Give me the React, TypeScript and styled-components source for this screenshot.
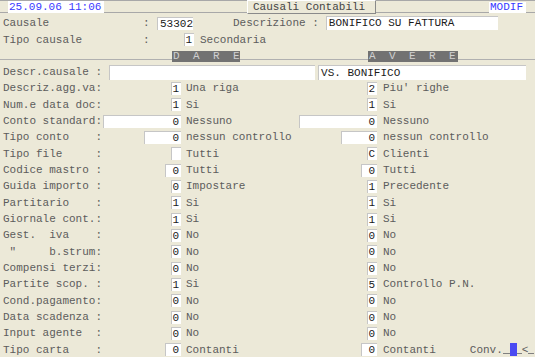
import React from "react"
import styled, { createGlobalStyle } from "styled-components"

// Global
const GlobalStyle = createGlobalStyle`
  *, *::before, *::after { box-sizing: border-box; }
  html, body { margin: 0; padding: 0; }
  body {
    background: #ece9d8;
    font-family: "Liberation Mono", "Courier New", monospace;
    font-size: 11px;
    color: #5c5c5c;
  }
`

const Screen = styled.div`
  width: 535px;
  height: 357px;
  overflow: hidden;
  background: #ece9d8;
`

// Top bar
const TopBar = styled.div`
  display: flex;
  align-items: flex-start;
  height: 15px;
  border-top: 1px solid #a8a8a8;
  background: linear-gradient(
    to bottom,
    transparent 11px,
    #a8a8a8 11px,
    #a8a8a8 12px,
    transparent 12px
  );
`

const Clock = styled.div`
  flex: none;
  margin-left: 8px;
  width: 96px;
  height: 12px;
  line-height: 12px;
  padding-left: 1px;
  background: #fff;
  color: #3a3aff;
`

const TitleTab = styled.div`
  flex: none;
  margin-left: 143px;
  margin-top: -1px;
  width: 129px;
  height: 14px;
  line-height: 12px;
  padding-left: 5px;
  border: 1px solid;
  border-color: #fff #8a8a8a #8a8a8a #fff;
  background: #ece9d8;
  color: #454545;
`

const ModeTag = styled.div`
  flex: none;
  margin-left: 113px;
  margin-top: 1px;
  width: 37px;
  height: 11px;
  line-height: 11px;
  padding-left: 1px;
  background: #fff;
  color: #3a3aff;
`

// Header rows
const HeadRow = styled.div<{ $h: number }>`
  display: flex;
  align-items: center;
  height: ${(p) => p.$h}px;
`

const HeadLabel = styled.span`
  flex: none;
  width: 143px;
  padding-left: 3px;
  white-space: pre;
`

const Colon = styled.span`
  flex: none;
  width: 14px;
`

const Text = styled.span<{ $ml?: number }>`
  flex: none;
  margin-left: ${(p) => p.$ml ?? 0}px;
  white-space: pre;
`

const Field = styled.span<{ $w: number; $ml?: number; $h?: number; $left?: boolean; $auto?: boolean }>`
  flex: none;
  display: inline-block;
  width: ${(p) => p.$w}px;
  height: ${(p) => p.$h ?? 13}px;
  line-height: ${(p) => (p.$h ?? 13) - 1}px;
  margin-left: ${(p) => (p.$auto ? "auto" : `${p.$ml ?? 0}px`)};
  padding: ${(p) => (p.$left ? "0 0 0 2px" : "0 2px 0 0")};
  text-align: ${(p) => (p.$left ? "left" : "right")};
  background: #fff;
  color: #1a1a1a;
  border-top: 1px solid #c6c6c6;
  border-left: 1px solid #c6c6c6;
  white-space: pre;
  overflow: hidden;
`

// Section headers
const SectionRow = styled.div`
  display: flex;
  height: 16px;
  background: linear-gradient(
    to bottom,
    transparent 11px,
    #b0b0b0 11px,
    #b0b0b0 12px,
    transparent 12px
  );
`

const SectionBar = styled.div<{ $ml: number; $w: number }>`
  flex: none;
  margin-left: ${(p) => p.$ml}px;
  margin-top: 3px;
  width: ${(p) => p.$w}px;
  height: 11px;
  line-height: 11px;
  padding-left: 1px;
  background: #727272;
  color: #d0d0d0;
  font-size: 11px;
  letter-spacing: 3.4px;
  white-space: pre;
`

// Form rows
const Row = styled.div`
  display: grid;
  grid-template-columns: 181px 196px 1fr;
  align-items: center;
  height: 16.33px;
`

const DescrRow = styled.div`
  display: flex;
  align-items: center;
  height: 16.33px;
  padding-left: 3px;
`

const Cell = styled.div<{ $pl: number }>`
  display: flex;
  align-items: center;
  padding-left: ${(p) => p.$pl}px;
  height: 100%;
  min-width: 0;
`

const ConvGroup = styled.div`
  display: flex;
  align-items: center;
  margin-left: 34px;
`

const Tick = styled.span<{ $w: number }>`
  display: inline-block;
  width: ${(p) => p.$w}px;
  height: 1px;
  margin-top: 7px;
  background: #808080;
`

const Cursor = styled.span`
  display: inline-block;
  width: 7px;
  height: 13px;
  background: #4a4af2;
`

type Val = { w: number; v: string }
type RowData = { label: string; l: Val; ld: string; r: Val; rd: string; conv?: boolean }

const d = (v: string): Val => ({ w: 10, v })

const rows: RowData[] = [
  { label: "Descriz.agg.va:", l: d("1"), ld: "Una riga", r: d("2"), rd: "Piu' righe" },
  { label: "Num.e data doc:", l: d("1"), ld: "Si", r: d("1"), rd: "Si" },
  { label: "Conto standard:", l: { w: 78, v: "0" }, ld: "Nessuno", r: { w: 78, v: "0" }, rd: "Nessuno" },
  { label: "Tipo conto    :", l: { w: 37, v: "0" }, ld: "nessun controllo", r: { w: 36, v: "0" }, rd: "nessun controllo" },
  { label: "Tipo file     :", l: d(""), ld: "Tutti", r: d("C"), rd: "Clienti" },
  { label: "Codice mastro :", l: { w: 16, v: "0" }, ld: "Tutti", r: { w: 16, v: "0" }, rd: "Tutti" },
  { label: "Guida importo :", l: d("0"), ld: "Impostare", r: d("1"), rd: "Precedente" },
  { label: "Partitario    :", l: d("1"), ld: "Si", r: d("1"), rd: "Si" },
  { label: "Giornale cont.:", l: d("1"), ld: "Si", r: d("1"), rd: "Si" },
  { label: "Gest.  iva    :", l: d("0"), ld: "No", r: d("0"), rd: "No" },
  { label: ' "     b.strum:', l: d("0"), ld: "No", r: d("0"), rd: "No" },
  { label: "Compensi terzi:", l: d("0"), ld: "No", r: d("0"), rd: "No" },
  { label: "Partite scop. :", l: d("1"), ld: "Si", r: d("5"), rd: "Controllo P.N." },
  { label: "Cond.pagamento:", l: d("0"), ld: "No", r: d("0"), rd: "No" },
  { label: "Data scadenza :", l: d("0"), ld: "No", r: d("0"), rd: "No" },
  { label: "Input agente  :", l: d("0"), ld: "No", r: d("0"), rd: "No" },
  { label: "Tipo carta    :", l: { w: 16, v: "0" }, ld: "Contanti", r: { w: 16, v: "0" }, rd: "Contanti", conv: true },
]

export default function App() {
  return (
    <Screen>
      <GlobalStyle />
      <TopBar>
        <Clock>25.09.06 11:06</Clock>
        <TitleTab>Causali Contabili</TitleTab>
        <ModeTag>MODIF</ModeTag>
      </TopBar>

      <HeadRow $h={16}>
        <HeadLabel>Causale</HeadLabel>
        <Colon>:</Colon>
        <Field $w={36} $left>53302</Field>
        <Text $ml={40}>Descrizione :</Text>
        <Field $w={172} $ml={7} $h={14} $left>BONIFICO SU FATTURA</Field>
      </HeadRow>
      <HeadRow $h={17}>
        <HeadLabel>Tipo causale</HeadLabel>
        <Colon>:</Colon>
        <Field $w={10} $ml={27}>1</Field>
        <Text $ml={6}>Secondaria</Text>
      </HeadRow>

      <SectionRow>
        <SectionBar $ml={172} $w={68}>D A R E</SectionBar>
        <SectionBar $ml={128} $w={90}>A V E R E</SectionBar>
      </SectionRow>

      <DescrRow>
        <Text>Descr.causale :</Text>
        <Field $w={206} $ml={7} $h={15} $left />
        <Field $w={208} $ml={3} $h={15} $left>VS. BONIFICO</Field>
      </DescrRow>

      {rows.map((r) => (
        <Row key={r.label}>
          <Cell $pl={3}>
            <Text>{r.label}</Text>
            <Field $w={r.l.w} $auto>{r.l.v}</Field>
          </Cell>
          <Cell $pl={5}>
            <Text>{r.ld}</Text>
            <Field $w={r.r.w} $auto>{r.r.v}</Field>
          </Cell>
          <Cell $pl={6}>
            <Text>{r.rd}</Text>
            {r.conv && (
              <ConvGroup>
                <Text>Conv.</Text>
                <Tick $w={7} />
                <Cursor />
                <Tick $w={5} />
                <Text>{"<"}</Text>
                <Tick $w={6} />
              </ConvGroup>
            )}
          </Cell>
        </Row>
      ))}
    </Screen>
  )
}
